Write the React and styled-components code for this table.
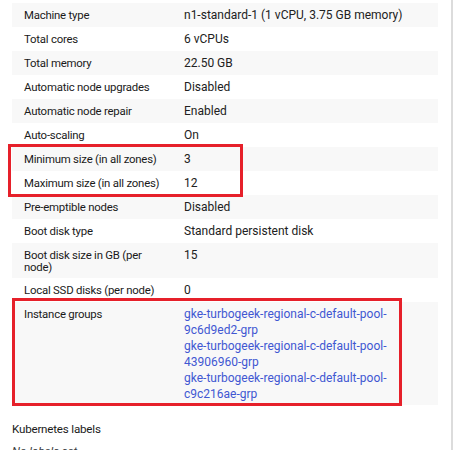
import React from "react";
import styled, { createGlobalStyle } from "styled-components";

const Global = createGlobalStyle`
  html, body { margin: 0; padding: 0; background: #fff; }
  body { font-family: Roboto, "Liberation Sans", Arial, sans-serif; color: #212121; }
`;

const Page = styled.div`
  display: flex;
  width: 459px;
  height: 450px;
  overflow: hidden;
  background: #fff;
`;

const Content = styled.div`
  width: 426px;
  margin-left: 12px;
  padding-top: 3px;
  flex: none;
`;

const Divider = styled.div`
  width: 2px;
  margin-left: 13px;
  background: #dcdcdc;
  flex: none;
`;

const Table = styled.div`
  display: flex;
  flex-direction: column;
`;

const Row = styled.div`
  display: grid;
  grid-template-columns: 160px 1fr;
  min-height: 24px;
  background: ${(p) => (p.$shade ? "#f8f8f8" : "#fff")};
`;

const Label = styled.div`
  padding: 6px 0 5px 12px;
  font-size: 11.4px;
  letter-spacing: -0.22px;
  line-height: 12px;
  color: #1a1a1a;
`;

const Value = styled.div`
  padding: 4px 12px 3px 12px;
  font-size: 12px;
  line-height: 16px;
  color: #212121;
`;

const Link = styled.a`
  display: block;
  color: #4157d2;
  text-decoration: none;
`;

const Highlight = styled.div`
  position: relative;
  &::after {
    content: "";
    position: absolute;
    left: ${(p) => p.$left}px;
    top: ${(p) => p.$top}px;
    width: ${(p) => p.$width}px;
    bottom: ${(p) => p.$bottom}px;
    border: 3px solid #e6202a;
    box-sizing: border-box;
    pointer-events: none;
  }
`;

const Section = styled.div`
  margin-top: 16px;
`;

const SectionTitle = styled.div`
  font-size: 11.6px;
  letter-spacing: -0.2px;
  line-height: 16px;
  color: #1a1a1a;
`;

const Empty = styled.div`
  margin-top: 6px;
  font-size: 11.6px;
  line-height: 16px;
  font-style: italic;
  color: #3c4043;
`;

const rowsA = [
  ["Machine type", "n1-standard-1 (1 vCPU, 3.75 GB memory)"],
  ["Total cores", "6 vCPUs"],
  ["Total memory", "22.50 GB"],
  ["Automatic node upgrades", "Disabled"],
  ["Automatic node repair", "Enabled"],
  ["Auto-scaling", "On"],
];
const rowsB = [
  ["Minimum size (in all zones)", "3"],
  ["Maximum size (in all zones)", "12"],
];
const rowsC = [
  ["Pre-emptible nodes", "Disabled"],
  ["Boot disk type", "Standard persistent disk"],
  ["Boot disk size in GB (per node)", "15"],
  ["Local SSD disks (per node)", "0"],
];
const groups = [
  "gke-turbogeek-regional-c-default-pool-9c6d9ed2-grp",
  "gke-turbogeek-regional-c-default-pool-43906960-grp",
  "gke-turbogeek-regional-c-default-pool-c9c216ae-grp",
];

function renderRows(rows, offset) {
  return rows.map(([k, v], i) => (
    <Row key={k} $shade={(i + offset) % 2 === 0}>
      <Label>{k}</Label>
      <Value>{v}</Value>
    </Row>
  ));
}

export default function App() {
  return (
    <>
      <Global />
      <Page>
        <Content>
          <Table>
            {renderRows(rowsA, 0)}
            <Highlight $left={-4} $top={-3} $width={235} $bottom={-2}>
              {renderRows(rowsB, 6)}
            </Highlight>
            {renderRows(rowsC, 8)}
            <Highlight $left={0} $top={-4} $width={390} $bottom={-1}>
              <Row $shade>
                <Label>Instance groups</Label>
                <Value>
                  {groups.map((g) => (
                    <Link key={g} href="#">
                      {g}
                    </Link>
                  ))}
                </Value>
              </Row>
            </Highlight>
          </Table>
          <Section>
            <SectionTitle>Kubernetes labels</SectionTitle>
            <Empty>No labels set</Empty>
          </Section>
        </Content>
        <Divider />
      </Page>
    </>
  );
}
